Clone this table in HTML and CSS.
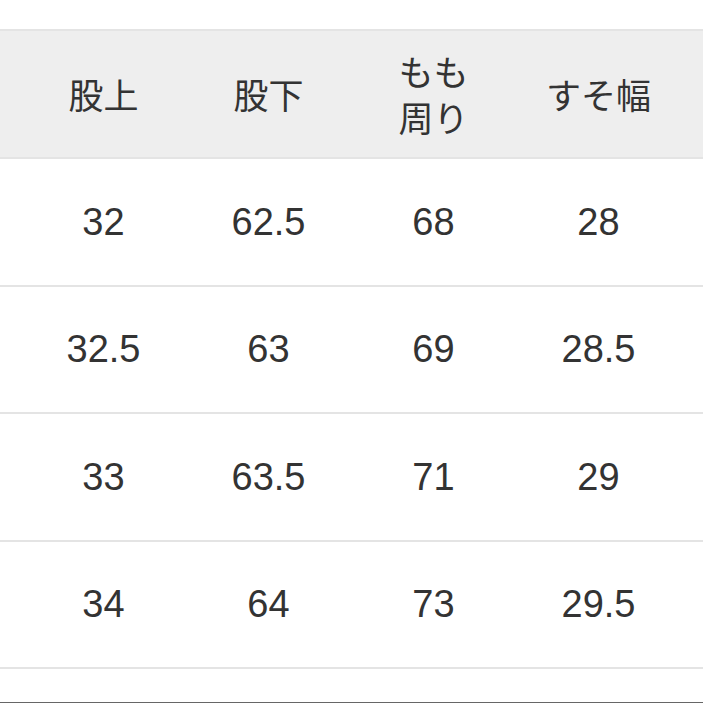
FILE: index.html
```html
<!DOCTYPE html>
<html lang="ja">
<head>
<meta charset="utf-8">
<link rel="stylesheet" href="styles.css">
</head>
<body>
<div class="page">
  <div class="table">
    <div class="row head">
      <div class="cell">股上</div>
      <div class="cell">股下</div>
      <div class="cell two"><span class="line">もも</span><span class="line">周り</span></div>
      <div class="cell">すそ幅</div>
    </div>
    <div class="row">
      <div class="cell">32</div>
      <div class="cell">62.5</div>
      <div class="cell">68</div>
      <div class="cell">28</div>
    </div>
    <div class="row">
      <div class="cell">32.5</div>
      <div class="cell">63</div>
      <div class="cell">69</div>
      <div class="cell">28.5</div>
    </div>
    <div class="row">
      <div class="cell">33</div>
      <div class="cell">63.5</div>
      <div class="cell">71</div>
      <div class="cell">29</div>
    </div>
    <div class="row">
      <div class="cell">34</div>
      <div class="cell">64</div>
      <div class="cell">73</div>
      <div class="cell">29.5</div>
    </div>
  </div>
  <div class="tail"></div>
</div>
</body>
</html>
```

FILE: styles.css
```css
html, body {
  margin: 0;
  padding: 0;
  background: #ffffff;
}
.page {
  padding-top: 29px;
  width: 703px;
  height: 703px;
  box-sizing: border-box;
  overflow: hidden;
  font-family: "Liberation Sans", "Noto Sans CJK JP", sans-serif;
  color: #333333;
}
.table {
  border-top: 2px solid #e4e4e4;
}
.row {
  display: grid;
  grid-template-columns: repeat(4, 165px);
  padding-left: 21px;
  height: 125.5px;
  border-bottom: 2px solid #e4e4e4;
  align-items: center;
  font-size: 38px;
}
.row.head {
  height: 126px;
  background: #eeeeee;
  font-family: "Noto Sans CJK JP", sans-serif;
  font-size: 35px;
}
.cell {
  text-align: center;
  line-height: 44px;
}
.cell.two {
  display: flex;
  flex-direction: column;
  align-items: center;
  gap: 2px;
}
.line {
  display: block;
  line-height: 44px;
  height: 44px;
  overflow: visible;
}
.tail {
  height: 33px;
  border-bottom: 1px solid #666666;
}
```
